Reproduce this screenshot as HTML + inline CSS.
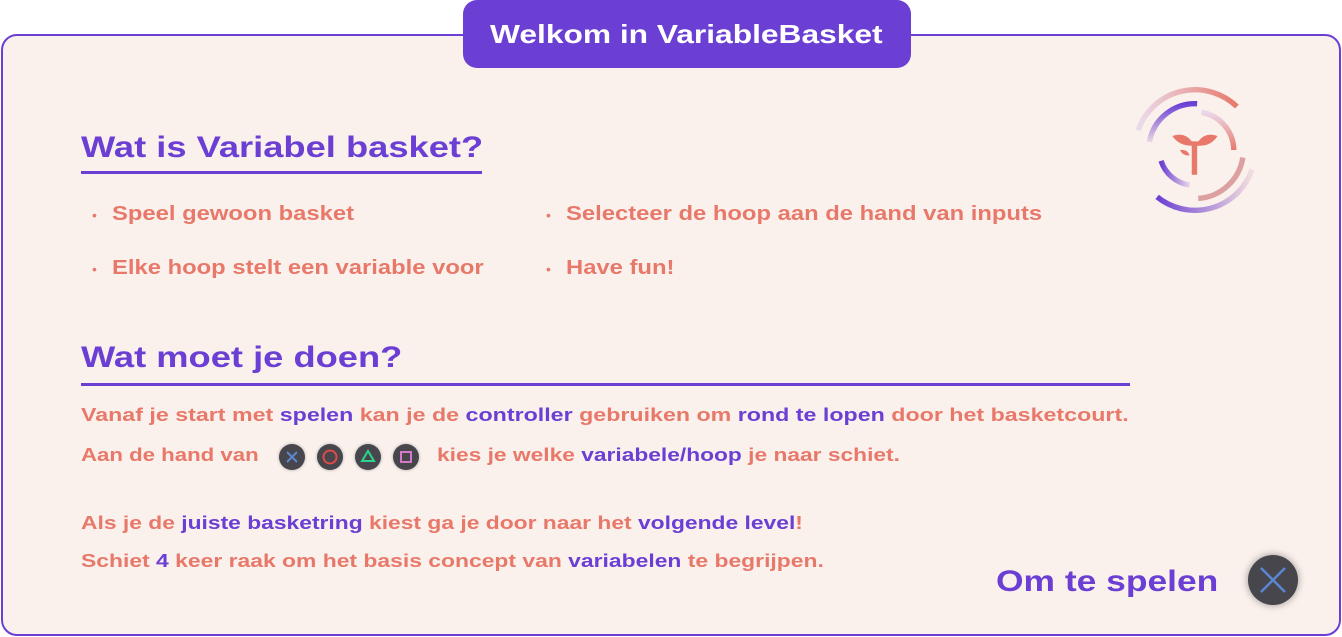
<!DOCTYPE html>
<html><head><meta charset="utf-8"><style>
*{margin:0;padding:0;box-sizing:border-box}
body{width:1342px;height:637px;background:#fff;font-family:"Liberation Sans",sans-serif;position:relative;overflow:hidden}
.card{position:absolute;left:1px;top:34px;width:1340px;height:602px;background:#faf1ec;border:2.5px solid #6b3fd4;border-radius:16px}
.tab{position:absolute;left:463px;top:0;width:448px;height:68px;background:#6b3fd4;border-radius:14px}
.s{transform-origin:0 50%;white-space:nowrap}
.h{position:absolute;left:81px;color:#6b3fd4;font-weight:bold;font-size:30px;transform:scaleX(1.21)}
.line{position:absolute;left:81px;height:3px;background:#6b3fd4}
.b{position:absolute;color:#e8796a;font-weight:bold;font-size:20px;transform:scaleX(1.19)}
.dot{position:absolute;color:#e8796a;font-size:14px}
.t{position:absolute;color:#e8796a;font-weight:bold;font-size:18.5px}
.t b{color:#6b3fd4}
.ic{position:absolute;top:444px;width:26px;height:26px;border-radius:50%;background:#46464c;box-shadow:0 0 3px rgba(0,0,0,.3)}
.ic svg{position:absolute;left:0;top:0}
</style></head><body>
<div class="card"></div>
<div class="tab"></div>
<div class="s" style="position:absolute;left:490px;top:19px;color:#fff;font-weight:bold;font-size:26px;transform:scaleX(1.22)">Welkom in VariableBasket</div>
<div class="h s" style="top:131px">Wat is Variabel basket?</div>
<div class="line" style="top:171px;width:401px"></div>
<div class="dot" style="left:92px;top:207px">•</div>
<div class="dot" style="left:92px;top:261px">•</div>
<div class="dot" style="left:546px;top:207px">•</div>
<div class="dot" style="left:546px;top:261px">•</div>
<div class="b s" style="left:112px;top:203px">Speel gewoon basket</div>
<div class="b s" style="left:112px;top:257px">Elke hoop stelt een variable voor</div>
<div class="b s" style="left:566px;top:203px">Selecteer de hoop aan de hand van inputs</div>
<div class="b s" style="left:566px;top:257px">Have fun!</div>
<div class="h s" style="top:341px">Wat moet je doen?</div>
<div class="line" style="top:383px;width:1049px"></div>
<div class="t s" style="left:81px;top:404px;transform:scaleX(1.255)">Vanaf je start met <b>spelen</b> kan je de <b>controller</b> gebruiken om <b>rond te lopen</b> door het basketcourt.</div>
<div class="t s" style="left:81px;top:444px;transform:scaleX(1.2)">Aan de hand van</div>
<span class="ic" style="left:279px"><svg width="26" height="26"><path d="M8 8L18 18M18 8L8 18" stroke="#5b87d0" stroke-width="2"/></svg></span>
<span class="ic" style="left:317px"><svg width="26" height="26"><circle cx="13" cy="13" r="6.5" fill="none" stroke="#e04a4a" stroke-width="2"/></svg></span>
<span class="ic" style="left:355px"><svg width="26" height="26"><path d="M13 7L19 17H7Z" fill="none" stroke="#2fd28c" stroke-width="2"/></svg></span>
<span class="ic" style="left:393px"><svg width="26" height="26"><rect x="8" y="8" width="10" height="10" fill="none" stroke="#d67ac8" stroke-width="2"/></svg></span>
<div class="t s" style="left:437px;top:444px;transform:scaleX(1.23)">kies je welke <b>variabele/hoop</b> je naar schiet.</div>
<div class="t s" style="left:81px;top:512px;transform:scaleX(1.234)">Als je de <b>juiste basketring</b> kiest ga je door naar het <b>volgende level</b>!</div>
<div class="t s" style="left:81px;top:550px;transform:scaleX(1.237)">Schiet <b>4</b> keer raak om het basis concept van <b>variabelen</b> te begrijpen.</div>
<div class="s" style="position:absolute;left:996px;top:565px;color:#6b3fd4;font-weight:bold;font-size:30px;transform:scaleX(1.18)">Om te spelen</div>
<div style="position:absolute;left:1248px;top:555px;width:50px;height:50px;border-radius:50%;background:#46464c;box-shadow:0 0 8px rgba(0,0,0,.4)">
<svg width="50" height="50"><path d="M13 13L37 37M37 13L13 37" stroke="#5b87d0" stroke-width="2.5"/></svg></div>
<svg style="position:absolute;left:1125px;top:80px" width="140" height="140" viewBox="0 0 130 130">
<defs>
<linearGradient id="g1" x1="0" y1="0" x2="1" y2="0"><stop offset="0" stop-color="#eadcec"/><stop offset="1" stop-color="#e8796a"/></linearGradient>
<linearGradient id="g2" x1="0" y1="0" x2="1" y2="0"><stop offset="0" stop-color="#6b3fd4"/><stop offset="1" stop-color="#f2dede"/></linearGradient>
<linearGradient id="g3" x1="0" y1="0" x2="0" y2="1"><stop offset="0" stop-color="#6b3fd4"/><stop offset="1" stop-color="#ead6e4"/></linearGradient>
<linearGradient id="g4" x1="0" y1="0" x2="0" y2="1"><stop offset="0" stop-color="#ead8ea"/><stop offset="1" stop-color="#e8796a"/></linearGradient>
<linearGradient id="g5" x1="0" y1="0" x2="1" y2="0"><stop offset="0" stop-color="#6b3fd4"/><stop offset="1" stop-color="#ead6e4"/></linearGradient>
</defs>
<g fill="none" stroke-width="5">
<path d="M12.1 46.8 A56 56 0 0 1 103.9 24.7" stroke="url(#g1)"/>
<path d="M118 83.2 A56 56 0 0 1 29.8 108.5" stroke="url(#g2)"/>
<path d="M22.7 57.5 A43 43 0 0 1 67 22" stroke="url(#g3)"/>
<path d="M71 30 A36 36 0 0 1 101 65" stroke="url(#g4)"/>
<path d="M33.5 75 A33 33 0 0 0 60 97.6" stroke="url(#g5)"/>
<path d="M109.4 72 A45 45 0 0 1 68 110" stroke="#dca0a0"/>
</g>
<path d="M44 52 Q55 48 62 57 L68 57 Q75 48 86 52 Q80 61 70 61 L67 61 L67 88 L62 88 L62 61 Q50 61 44 52Z" fill="#e8796a"/>
<path d="M51 65 Q58 64 60 70 Q54 71 51 65Z" fill="#e8796a"/>
</svg>
</body></html>
